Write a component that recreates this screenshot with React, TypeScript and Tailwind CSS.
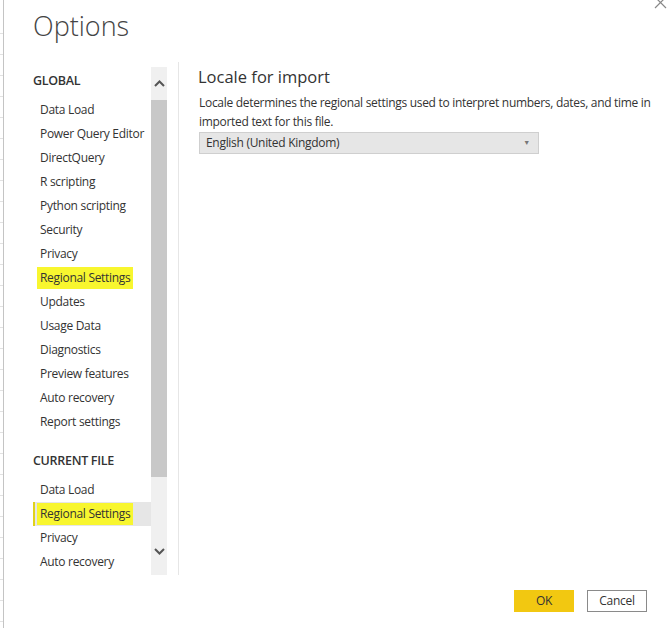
import { useState } from "react";

const globalItems = [
  "Data Load",
  "Power Query Editor",
  "DirectQuery",
  "R scripting",
  "Python scripting",
  "Security",
  "Privacy",
  "Regional Settings",
  "Updates",
  "Usage Data",
  "Diagnostics",
  "Preview features",
  "Auto recovery",
  "Report settings",
];

const fileItems = ["Data Load", "Regional Settings", "Privacy", "Auto recovery"];

function Highlight({ children }: { children: string }) {
  return <span className="bg-[#f8f62f] px-[3px] -mx-[3px] py-[2px]">{children}</span>;
}

function NavItem({ label, selected }: { label: string; selected?: boolean }) {
  const marked = label === "Regional Settings";
  return (
    <div
      className={
        "h-6 flex items-center whitespace-nowrap " +
        (selected ? "bg-[#e6e6e6] border-l-2 border-[#e0d21a] pl-[5px]" : "pl-[7px]")
      }
    >
      {marked ? <Highlight>{label}</Highlight> : label}
    </div>
  );
}

function Chevron({ up }: { up?: boolean }) {
  return (
    <svg width="11" height="7" viewBox="0 0 11 7">
      <polyline
        points={up ? "1,6 5.5,1.5 10,6" : "1,1 5.5,5.5 10,1"}
        fill="none"
        stroke="#555"
        strokeWidth="2"
      />
    </svg>
  );
}

export default function App() {
  const [locale] = useState("English (United Kingdom)");

  return (
    <div className="w-[667px] h-[628px] flex bg-white overflow-hidden text-[#252423] font-['Open_Sans',sans-serif] tracking-[-0.3px]">
      {/* bit of the workbook behind the dialog */}
      <div className="w-[4px] shrink-0 border-r border-[#c4c4c4] pt-[13px]">
        {Array.from({ length: 29 }).map((_, i) => (
          <div key={i} className="h-[21px] border-b border-[#e2e2e2]" />
        ))}
      </div>

      <div className="flex-1 flex flex-col relative">
        {/* close button, cut off by the screenshot */}
        <svg className="absolute right-0 top-0" width="13" height="9" viewBox="0 0 13 9">
          <path d="M1 -3 L12 8 M12 -3 L1 8" stroke="#888" strokeWidth="1.2" fill="none" />
        </svg>

        <div className="h-[68px] pl-[29px] pt-[6px]">
          <h1 className="text-[27px] font-light text-[#444] leading-[40px] tracking-normal">Options</h1>
        </div>

        <div className="flex h-[507px]">
          <div className="flex pl-[29px]">
            <div className="w-[118px] text-[12px] text-[#333] overflow-hidden">
              <div className="h-[30px] pt-[4px] leading-[18px] text-[12.5px] font-semibold text-[#333]">GLOBAL</div>
              {globalItems.map((item) => (
                <NavItem key={item} label={item} />
              ))}
              <div className="h-[44px] pt-[18px] leading-[18px] text-[12.5px] font-semibold">CURRENT FILE</div>
              {fileItems.map((item) => (
                <NavItem key={item} label={item} selected={item === "Regional Settings"} />
              ))}
            </div>
            <div className="w-4 bg-[#f0f0f0] flex flex-col -mt-px">
              <div className="h-[33px] flex items-center justify-center">
                <Chevron up />
              </div>
              <div className="h-[377px] bg-[#c8c8c8]" />
              <div className="flex-1 flex items-end justify-center pb-[20px]">
                <Chevron />
              </div>
            </div>
          </div>

          <div className="ml-[11px] border-l border-[#e6e6e6] -mt-[6px] pl-[19px] pt-[3px]">
            <h2 className="text-[16.5px] leading-6 text-[#333] tracking-normal">Locale for import</h2>
            <p className="mt-[4px] pl-px text-[12px] leading-[19px] text-[#333] w-[462px]">
              Locale determines the regional settings used to interpret numbers, dates, and time in imported text for
              this file.
            </p>
            <div className="mt-[1px] ml-px w-[340px] h-[22px] bg-[#e6e6e6] border border-[#cfcfcf] flex items-center justify-between pl-[6px] pr-[8px] text-[12px] text-[#333]">
              <span>{locale}</span>
              <span className="text-[7px] text-[#777]">▼</span>
            </div>
          </div>
        </div>

        <div className="flex-1 flex justify-end items-start pt-[15px] pr-[20px] gap-[13px] text-[12px]">
          <button className="w-[60px] h-[22px] bg-[#f2c811] text-[#333]">OK</button>
          <button className="w-[60px] h-[22px] bg-white border border-[#8a8a8a] text-[#333]">Cancel</button>
        </div>
      </div>
    </div>
  );
}
